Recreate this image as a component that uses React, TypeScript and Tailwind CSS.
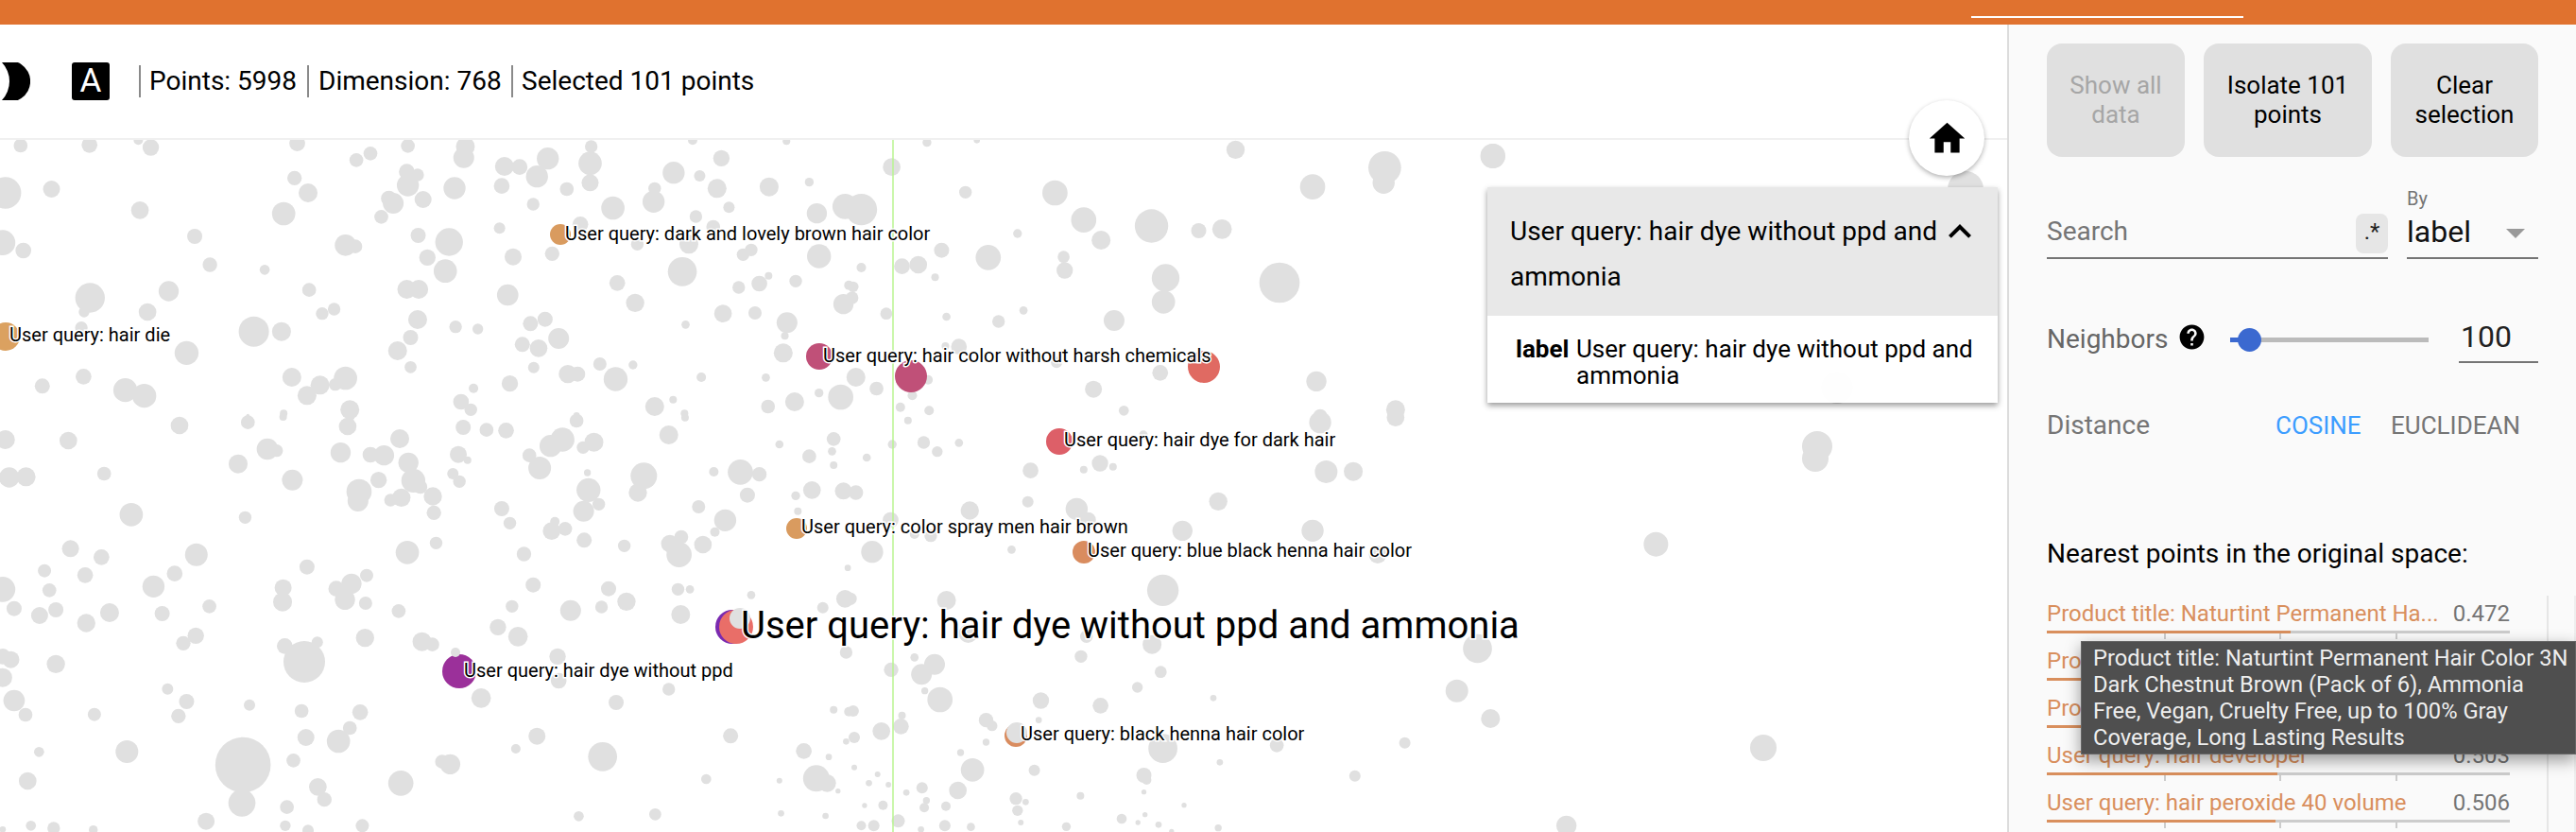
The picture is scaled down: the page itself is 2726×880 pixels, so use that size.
const KX = 1568 / 900;

// dot lists are read off zoomed crops: [x, y, r] in crop pixels (x scaled by KX, y and r by 3)
const zoneA = [[38,462,22],[165,460,25],[255,445,15],[278,468,26],[548,455,25],[752,463,22],[683,487,22],[657,508,22],[858,465,30],[855,500,33],[930,528,30],[958,530,25],[1010,503,35],[990,560,35],[1088,518,37],[1090,465,20],[1088,580,27],[1045,600,22],[925,590,25],[1242,548,35],[1330,502,26],[1290,558,18],[1322,598,30],[1418,593,30],[1492,578,14],[1277,445,15],[1450,448,12],[750,545,25],[770,555,20],[752,588,35],[838,597,35],[780,633,27],[725,645,33],[717,630,25],[703,688,22],[543,565,23],[568,612,30],[523,678,37],[258,667,28],[95,600,27],[10,612,50],[983,648,20],[1130,660,37],[1205,640,35],[1207,598,20],[1344,658,18],[1283,687,20],[1315,720,22],[1506,677,32],[1558,655,40],[1070,712,25],[921,724,18],[771,747,24],[828,768,44],[637,778,34],[655,782,22],[359,750,24],[5,770,40],[43,795,25],[788,817,26],[946,815,27],[1018,805,23],[1175,775,20],[1270,775,30],[1385,793,20],[1370,808,20],[1510,813,38],[387,840,23],[488,856,16],[821,860,37],[1258,862,46],[1138,898,25],[1417,875,12],[1400,900,25],[1362,912,20],[1467,892,20],[1565,905,15],[570,920,22],[311,924,32],[166,945,47],[155,990,17],[750,918,30],[772,918,30],[936,936,34],[1171,961,29],[1555,965,32],[272,990,28],[594,995,20],[616,981,20],[770,1014,30],[1333,995,28],[1392,993,21],[1451,1024,33],[1447,1066,12],[1264,1030,13],[1005,1013,24],[978,1027,24],[840,1037,20],[881,1044,17],[468,1052,48],[519,1052,30],[150,1040,20],[1030,1074,33],[757,1071,24],[963,1093,24],[993,1105,28],[344,1120,38],[733,1113,30],[1444,1120,30],[1106,1155,21],[1167,1158,14],[984,1166,18],[757,1165,19],[154,1195,25],[1047,1187,29],[1065,1187,24],[1135,1203,38],[1293,1197,15],[1412,1198,13],[538,1197,30],[590,1222,30],[637,1200,37],[618,1220,20],[78,1225,24],[231,1238,38],[266,1256,38],[940,1217,26],[873,1232,15],[566,1255,30],[1510,1247,14],[1241,1268,12],[1550,1260,40],[1465,1275,30],[850,1275,25],[868,1300,20],[1207,1290,30],[1416,1290,22],[645,1300,30],[1262,1312,12],[523,1312,12],[1063,1318,10],[457,1318,5]];

const zoneB = [[10,75,30],[126,78,28],[331,30,28],[457,20,22],[522,3,12],[641,33,28],[648,3,10],[737,72,30],[854,36,24],[897,44,22],[933,46,25],[1063,15,22],[1263,5,12],[1233,60,30],[1037,75,38],[1015,95,35],[1095,83,30],[1075,100,20],[1537,73,22],[1437,90,13],[1492,128,22],[1534,112,13],[1537,156,12],[493,105,34],[510,110,20],[439,152,30],[628,116,32],[683,123,25],[708,125,32],[753,148,32],[845,122,27],[862,140,12],[976,125,22],[995,165,36],[1083,180,11],[1187,190,42],[1176,243,29],[1365,178,40],[1400,185,23],[1316,177,15],[17,195,32],[48,193,30],[192,183,22],[539,203,33],[698,203,26],[762,205,38],[775,225,22],[835,183,18],[847,208,20],[1085,235,38],[1104,280,20],[1076,302,33],[1288,288,21],[1497,235,28],[1467,253,14],[1378,251,24],[1555,238,27],[662,240,40],[660,270,33],[740,259,29],[720,267,20],[798,255,29],[800,307,23],[242,313,37],[452,322,20],[925,294,24],[940,340,20],[1337,331,35],[1471,302,12],[1318,368,15],[1023,335,15],[1017,365,28],[1042,358,22],[1077,394,24],[1256,384,22],[1235,405,28],[1252,440,40],[1296,408,28],[1151,412,20],[966,438,23],[130,421,27],[362,440,36],[751,433,37],[804,403,20],[187,448,25],[82,491,21],[157,505,25],[322,500,25],[566,479,24],[1563,482,10],[676,506,21],[5,550,40],[283,541,35],[522,545,27],[521,590,30],[620,548,25],[648,532,32],[636,583,32],[983,536,24],[1122,548,24],[1250,550,20],[1272,550,13],[1385,568,13],[1155,589,29],[1558,580,28],[91,553,22],[26,611,24],[103,615,24],[73,633,27],[202,624,30],[159,657,29],[299,627,24],[386,604,22],[674,594,21],[735,619,22],[944,604,20],[1052,617,33],[1109,606,20],[1255,630,30],[1517,608,18],[918,670,26],[955,700,31],[361,697,26],[338,721,23],[673,704,29],[778,716,30],[797,725,22],[525,730,25],[561,780,66],[585,718,18],[1028,763,26],[1560,750,20],[20,773,27],[5,763,25],[103,787,29],[5,830,30],[1030,840,25],[887,895,31],[1233,867,20],[309,866,18],[26,903,34],[344,906,24],[1136,909,24],[460,917,18],[556,936,22],[664,940,25],[47,948,22],[174,947,21],[329,952,23],[1537,932,12],[1565,938,15],[645,990,22],[624,1032,37],[564,1020,27],[990,1016,27],[1347,1015,24],[448,1107,88],[1560,1033,10],[1482,1063,25],[234,1065,36],[951,1056,15],[1111,1081,46],[72,1066,16],[541,1093,22],[830,1105,32],[815,1097,22],[1528,1082,10],[739,1165,40],[1302,1152,16],[1437,1157,9],[51,1158,28],[1505,1150,42],[1525,1165,28],[586,1177,28],[1545,1190,8],[598,1217,23],[446,1228,43],[529,1241,22],[1067,1270,16],[1208,1264,19],[1440,1261,10],[1522,1269,10],[380,1286,27],[57,1300,16],[99,1308,20],[526,1300,17],[668,1300,21],[172,1313,14],[568,1315,18],[5,1312,10]];

const zoneC = [[141,452,14],[233,445,10],[710,475,29],[985,532,52],[983,580,35],[1184,495,39],[76,530,28],[212,610,20],[377,612,40],[852,593,40],[20,665,50],[430,698,40],[555,717,53],[642,732,24],[685,727,31],[462,762,30],[308,741,14],[168,794,24],[254,817,40],[393,815,19],[395,858,26],[20,849,15],[156,880,12],[95,845,25],[125,840,28],[581,882,44],[791,897,64],[577,958,37],[5,910,17],[3,945,20],[66,995,19],[177,1005,13],[319,985,13],[273,1020,20],[486,1017,33],[200,1100,25],[175,1098,12],[380,1150,18],[10,1197,30],[48,1233,22],[143,1205,15],[114,1255,15],[92,1292,15],[145,1303,15],[571,1183,25],[448,1235,27],[504,1303,16],[859,1210,32],[866,1320,22],[1005,1300,30]];

const zoneD = [[106,14,12],[135,84,20],[77,90,14],[160,113,17],[200,85,13],[30,132,13],[866,20,35],[1005,5,28],[540,60,14],[460,150,26],[484,161,12],[430,170,12],[332,173,25],[877,177,36],[927,176,30],[10,243,23],[327,272,18],[678,271,29],[220,300,29],[417,295,35],[438,330,25],[852,364,35],[612,364,32],[74,330,25],[1485,407,39],[148,380,20],[297,424,13],[40,431,35],[972,440,28],[118,375,15],[576,553,50],[177,585,30],[0,580,20],[217,690,30],[435,700,20],[556,725,30],[1156,738,46],[425,763,20],[155,788,33],[118,766,13],[75,805,23],[131,820,33],[572,812,19],[529,861,17],[137,872,11],[165,900,40],[1118,872,36],[669,895,10],[351,903,26],[461,919,25],[1180,960,30],[5,936,18],[95,950,12],[250,965,23],[261,983,17],[347,965,10],[57,1000,28],[93,985,25],[7,1020,18],[576,1055,46],[786,1045,22],[250,1035,11],[1022,1037,18],[203,1068,11],[681,1099,10],[225,1123,37],[339,1124,18],[930,1142,18],[7,1115,9],[50,1137,9],[34,1165,10],[70,1170,9],[541,1140,24],[546,1155,15],[198,1188,28],[132,1180,18],[103,1195,10],[541,1193,8],[424,1205,12],[305,1214,20],[323,1225,10],[140,1220,11],[60,1235,15],[26,1236,8],[136,1243,15],[176,1238,15],[615,1235,8],[308,1252,17],[543,1265,8],[500,1278,16],[88,1285,21],[530,1290,8],[314,1290,9],[20,1300,15],[43,1300,18],[174,1300,18],[222,1304,13],[398,1303,14],[568,1297,10],[678,1307,11],[1320,1300,32],[130,1312,10],[592,1318,8]];

const place = (list: number[][], ox: number, oy: number) =>
  list.map(([x, y, r]) => [ox + x / KX, oy + y / 3, r / 3]);

const DOTS = [
  ...place(zoneA, 0, 0),
  ...place(zoneB, 0, 440),
  ...place(zoneC, 900, 0),
  ...place(zoneD, 900, 440),
  [1923, 472, 16],
  [1921, 485, 14],
  [1866, 791, 14],
  [1580, 165, 13],
  [2080, 200, 19],
  [1944, 410, 17],
];

const POINTS = [
  { x: 593, y: 248, r: 11, color: "#d99b5f" },
  { x: 6, y: 356, r: 15, color: "#dba160" },
  { x: 867, y: 377, r: 14, color: "#c05078" },
  { x: 964, y: 398, r: 17, color: "#c05078" },
  { x: 1274, y: 388, r: 17, color: "#e06a62" },
  { x: 1121, y: 467, r: 14, color: "#dd5f68" },
  { x: 843, y: 559, r: 11, color: "#d99b5f" },
  { x: 1147, y: 584, r: 12, color: "#d98c5f" },
  { x: 486, y: 710, r: 18, color: "#9b309a" },
  { x: 1075, y: 778, r: 12, color: "#d98c5f" },
];

const LABELS = [
  { x: 598, y: 254, text: "User query: dark and lovely brown hair color" },
  { x: 10, y: 361, text: "User query: hair die" },
  { x: 871, y: 383, text: "User query: hair color without harsh chemicals" },
  { x: 1126, y: 472, text: "User query: hair dye for dark hair" },
  { x: 848, y: 564, text: "User query: color spray men hair brown" },
  { x: 1151, y: 589, text: "User query: blue black henna hair color" },
  { x: 491, y: 716, text: "User query: hair dye without ppd" },
  { x: 1080, y: 783, text: "User query: black henna hair color" },
];

const NEAREST = [
  { label: "Product title: Naturtint Permanent Ha...", value: "0.472", fill: 258 },
  { label: "Product title: Naturtint Permanent Ha...", value: "0.488", fill: 250 },
  { label: "Product title: Clairol Nice'n Easy Hai...", value: "0.497", fill: 248 },
  { label: "User query: hair developer", value: "0.503", fill: 244 },
  { label: "User query: hair peroxide 40 volume", value: "0.506", fill: 242 },
];

const TOOLTIP_LINES = [
  "Product title: Naturtint Permanent Hair Color 3N",
  "Dark Chestnut Brown (Pack of 6), Ammonia",
  "Free, Vegan, Cruelty Free, up to 100% Gray",
  "Coverage, Long Lasting Results",
];

function Scatter() {
  return (
    <svg className="absolute inset-0 w-full h-full" viewBox="0 148 2124 732">
      {DOTS.map(([x, y, r], i) => (
        <circle key={i} cx={x} cy={y} r={r} fill="#e0e0e0" />
      ))}
      <line x1="945" y1="148" x2="945" y2="880" stroke="#b8f590" strokeWidth="1.5" />
      {POINTS.map((p, i) => (
        <circle key={i} cx={p.x} cy={p.y} r={p.r} fill={p.color} />
      ))}
      <circle cx="482" cy="690" r="5" fill="#e0e0e0" />
      <circle cx="1076" cy="775" r="11" fill="#e0e0e0" />
      <circle cx="775" cy="663" r="18" fill="#7a2ab0" />
      <circle cx="779" cy="663" r="18" fill="#e96e68" />
      <circle cx="783" cy="654" r="11" fill="#e0e0e0" />
      {LABELS.map((l) => (
        <text
          key={l.text}
          x={l.x}
          y={l.y}
          className="font-['Roboto',sans-serif] text-[20px] fill-black stroke-white stroke-[3px] [paint-order:stroke]"
        >
          {l.text}
        </text>
      ))}
      <text
        x="784"
        y="675"
        className="font-['Roboto',sans-serif] text-[40px] fill-black stroke-white stroke-[3px] [paint-order:stroke]"
      >
        User query: hair dye without ppd and ammonia
      </text>
    </svg>
  );
}

function Toolbar() {
  return (
    <div className="h-[122px] border-b-2 border-[#f0f0f0] flex items-center text-[28px] text-black shrink-0 bg-white relative z-10">
      <svg className="w-[32px] h-[40px] shrink-0" viewBox="0 0 32 40">
        <path d="M2 0A21.7 21.7 0 1 1 2 40A29 29 0 0 0 2 0z" fill="#000" />
      </svg>
      <div className="ml-[44px] w-[40px] h-[40px] rounded-[3px] bg-black text-white flex items-center justify-center text-[35px] shrink-0">
        A
      </div>
      <div className="ml-[31px] h-[34px] border-l-2 border-[#8a8a8a] pl-[9px] flex items-center w-[178px]">
        Points: 5998
      </div>
      <div className="h-[34px] border-l-2 border-[#8a8a8a] pl-[10px] flex items-center w-[216px]">
        Dimension: 768
      </div>
      <div className="h-[34px] border-l-2 border-[#8a8a8a] pl-[9px] flex items-center">
        Selected 101 points
      </div>
    </div>
  );
}

function DetailCard() {
  return (
    <div className="absolute top-[172px] right-[10px] w-[540px] shadow-[0_3px_6px_rgba(0,0,0,0.4)] z-20">
      <div className="bg-[#e8e8e8] flex items-start pl-[24px] pr-[16px] pt-[23px] pb-[17px] text-[28px] leading-[48px] text-black">
        <div className="flex-1">User query: hair dye without ppd and ammonia</div>
        <svg className="w-[48px] h-[48px] shrink-0 -ml-[8px]" viewBox="0 0 24 24" fill="#000">
          <path d="M12 8l-6 6 1.41 1.41L12 10.83l4.59 4.58L18 14z" />
        </svg>
      </div>
      <div className="bg-white/[.97] flex pl-[30px] pt-[21px] pb-[15px] pr-[20px] text-[26px] leading-[28px] text-black">
        <div className="w-[64px] font-bold shrink-0">label</div>
        <div>User query: hair dye without ppd and ammonia</div>
      </div>
    </div>
  );
}

function SidePanel() {
  return (
    <aside className="relative w-[602px] shrink-0 h-[854px] overflow-hidden border-l-2 border-[#dcdcdc] bg-[#fafafa] pl-[40px] pt-[20px] font-['Roboto',sans-serif]">
      <div className="flex gap-[20px] w-[520px] text-[26px] leading-[31.5px] text-center">
        <div className="w-[146px] h-[120px] rounded-[16px] bg-[#e0e0e0] text-[#a6a6a6] flex items-center justify-center px-[20px]">
          Show all data
        </div>
        <div className="w-[178px] h-[120px] rounded-[16px] bg-[#e0e0e0] text-black flex items-center justify-center px-[20px]">
          Isolate 101 points
        </div>
        <div className="w-[156px] h-[120px] rounded-[16px] bg-[#e0e0e0] text-black flex items-center justify-center px-[10px]">
          Clear selection
        </div>
      </div>

      <div className="flex gap-[20px] w-[520px] mt-[40px] h-[68px]">
        <div className="w-[361px] border-b-2 border-[#757575] flex items-end justify-between pb-[4px]">
          <span className="text-[28px] leading-[46px] text-[#757575]">Search</span>
          <span className="w-[34px] h-[42px] rounded-[8px] bg-[#e6e6e6] text-[24px] leading-[38px] text-center text-[#222]">.*</span>
        </div>
        <div className="w-[139px] border-b-2 border-[#757575] relative">
          <div className="text-[20px] leading-[24px] text-[#757575] -mt-[8px]">By</div>
          <div className="text-[32px] leading-[40px] text-[#111] mt-[3px]">label</div>
          <div className="absolute right-[14px] top-[36px] w-0 h-0 border-x-[10px] border-x-transparent border-t-[10px] border-t-[#999]" />
        </div>
      </div>

      <div className="flex items-center w-[520px] mt-[60px] h-[50px]">
        <span className="text-[28px] text-[#666] w-[138px] shrink-0">Neighbors</span>
        <svg className="w-[31px] h-[31px] shrink-0 -mt-[5px]" viewBox="0 0 24 24" fill="#000">
          <path d="M12 2C6.48 2 2 6.48 2 12s4.48 10 10 10 10-4.48 10-10S17.52 2 12 2zm1 17h-2v-2h2v2zm2.07-7.75l-.9.92C13.45 12.9 13 13.5 13 15h-2v-.5c0-1.1.45-2.1 1.17-2.83l1.24-1.26c.37-.36.59-.86.59-1.41 0-1.1-.9-2-2-2s-2 .9-2 2H8c0-2.21 1.79-4 4-4s4 1.79 4 4c0 .88-.36 1.68-.93 2.25z" />
        </svg>
        <div className="relative ml-[25px] w-[210px] h-[5px] bg-[#bbbbbb] shrink-0">
          <div className="absolute left-0 top-0 h-full w-[20px] bg-[#3b69d0]" />
          <div className="absolute left-[8px] -top-[10px] w-[25px] h-[25px] rounded-full bg-[#3b69d0]" />
        </div>
        <div className="ml-[32px] w-[84px] h-[50px] border-b-2 border-[#757575] text-[32px] leading-[44px] text-[#222] shrink-0 pl-[2px]">
          100
        </div>
      </div>

      <div className="flex items-center w-[520px] mt-[46px] h-[40px] text-[26px] text-[#757575]">
        <span className="text-[28px] w-[242px]">Distance</span>
        <span className="text-[#3c9dff] w-[122px]">COSINE</span>
        <span>EUCLIDEAN</span>
      </div>

      <div className="mt-[98px] h-[36px] text-[28px] leading-[36px] text-black">
        Nearest points in the original space:
      </div>

      <div className="flex mt-[26px]">
        <div className="w-[531px] shrink-0 border-r-2 border-[#e6e6e6]">
          {NEAREST.map((row) => (
            <div key={row.label + row.value} className="w-[490px] h-[50px]">
              <div className="flex justify-between h-[37px] items-center text-[24px] whitespace-nowrap">
                <span className="text-[#d98f5d]">{row.label}</span>
                <span className="text-[#757575]">{row.value}</span>
              </div>
              <div className="relative h-[3px] bg-[#cccccc]">
                <div className="h-full bg-[#d98f5d]" style={{ width: row.fill }} />
                <div className="absolute left-[124px] top-[3px] w-[2px] h-[6px] bg-[#cccccc]" />
                <div className="absolute left-[246px] top-[3px] w-[2px] h-[6px] bg-[#cccccc]" />
                <div className="absolute left-[369px] top-[3px] w-[2px] h-[6px] bg-[#cccccc]" />
              </div>
            </div>
          ))}
        </div>
        <div className="flex-1 border-r-2 border-[#eeeeee] h-[250px]" />
      </div>

      <div className="absolute left-[76px] top-[652px] w-[524px] h-[120px] bg-[#4f4f4f] border border-[#666] shadow-[0_6px_16px_rgba(0,0,0,0.4)] pl-[12px] pt-[3px] text-[23.7px] leading-[28px] text-[#eeeeee] whitespace-nowrap z-10">
        {TOOLTIP_LINES.map((line) => (
          <div key={line}>{line}</div>
        ))}
      </div>
    </aside>
  );
}

export default function App() {
  return (
    <div className="w-[2726px] h-[880px] overflow-hidden flex flex-col bg-white font-['Roboto',sans-serif]">
      <div className="h-[26px] shrink-0 bg-[#e0722f] pl-[2086px] pt-[17px]">
        <div className="w-[288px] h-[2px] bg-white" />
      </div>
      <div className="flex flex-1 min-h-0">
        <main className="relative flex-1 flex flex-col min-w-0">
          <Toolbar />
          <div className="relative flex-1 overflow-hidden">
            <Scatter />
          </div>
          <div className="absolute left-[2020px] top-[80px] w-[80px] h-[80px] rounded-full bg-white shadow-[0_2px_5px_rgba(0,0,0,0.3)] flex items-center justify-center z-20">
            <svg className="w-[45px] h-[45px]" viewBox="0 0 24 24" fill="#000">
              <path d="M10 20v-6h4v6h5v-8h3L12 3 2 12h3v8z" />
            </svg>
          </div>
          <DetailCard />
        </main>
        <SidePanel />
      </div>
    </div>
  );
}
